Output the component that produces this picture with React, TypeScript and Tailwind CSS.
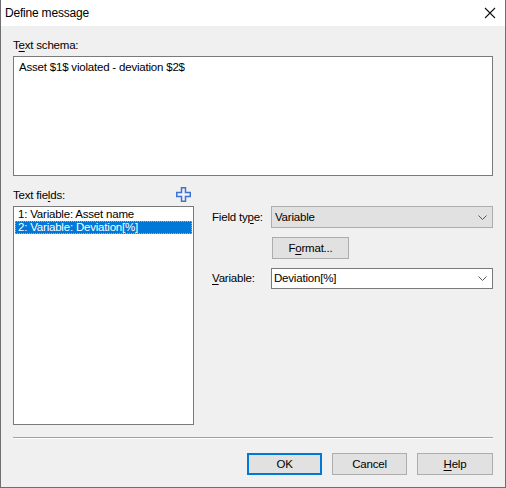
const font = { fontFamily: '"Liberation Sans", Arial, sans-serif' };

function Chevron() {
  return (
    <svg width="9" height="5" viewBox="0 0 9 5" className="shrink-0">
      <path d="M0.5 0.5 L4.5 4.5 L8.5 0.5" fill="none" stroke="#555" strokeWidth="1" />
    </svg>
  );
}

function Label({ pre, u, post, className = "" }: { pre: string; u: string; post: string; className?: string }) {
  return (
    <span className={className}>
      {pre}
      <span className="underline underline-offset-2">{u}</span>
      {post}
    </span>
  );
}

export default function App() {
  return (
    <div
      className="w-[506px] h-[488px] flex flex-col bg-[#f0f0f0] border-x border-b border-[#6f6f6f] text-[11.5px] tracking-[-0.2px] text-black leading-[15px]"
      style={font}
    >
      {/* title bar */}
      <div className="h-[26px] bg-white flex items-center justify-between pl-[4px] pr-[9px] shrink-0">
        <span className="text-[12px]">Define message</span>
        <svg width="12" height="12" viewBox="0 0 12 12">
          <path d="M1 1 L11 11 M11 1 L1 11" stroke="#111" strokeWidth="1.1" />
        </svg>
      </div>

      <div className="flex flex-col flex-1 px-[12px] pt-[12px]">
        <Label pre="T" u="e" post="xt schema:" />
        <div className="mt-[3px] h-[120px] bg-white border border-[#7a7a7a] px-[5px] pt-[3px]">
          Asset $1$ violated - deviation $2$
        </div>

        <div className="flex mt-[10px]">
          <div className="w-[181px] flex flex-col">
            <div className="h-[20px] flex items-start justify-between pr-[3px]">
              <Label pre="Text fie" u="l" post="ds:" className="mt-[2px]" />
              <svg width="15" height="15" viewBox="0 0 15 15" className="mt-[1px]">
                <path
                  d="M5.5 0.75 H9.5 V5.5 H14.25 V9.5 H9.5 V14.25 H5.5 V9.5 H0.75 V5.5 H5.5 Z"
                  fill="none"
                  stroke="#3d74d4"
                  strokeWidth="1.5"
                />
              </svg>
            </div>
            <div className="h-[219px] bg-white border border-[#7a7a7a] p-[1px]">
              <div className="h-[13px] leading-[13px] pl-[3px]">1: Variable: Asset name</div>
              <div className="h-[13px] leading-[11px] pl-[2px] bg-[#0078d7] text-white border border-dotted border-[#f0a060]">
                2: Variable: Deviation[%]
              </div>
            </div>
          </div>

          <div className="flex-1 ml-[18px] pt-[20px] flex flex-col">
            <div className="flex items-center h-[22px]">
              <Label pre="Field ty" u="p" post="e:" className="w-[59px]" />
              <div className="flex-1 h-[22px] bg-[#e1e1e1] border border-[#adadad] flex items-center justify-between pl-[3px] pr-[5px]">
                <span>Variable</span>
                <Chevron />
              </div>
            </div>
            <div className="flex mt-[9px] pl-[60px]">
              <div className="w-[77px] h-[22px] bg-[#e1e1e1] border border-[#adadad] flex items-center justify-center">
                <Label pre="F" u="o" post="rmat..." />
              </div>
            </div>
            <div className="flex items-center h-[21px] mt-[9px]">
              <Label pre="" u="V" post="ariable:" className="w-[59px]" />
              <div className="flex-1 h-[21px] bg-white border border-[#7a7a7a] flex items-center justify-between pl-[2px] pr-[5px]">
                <span>Deviation[%]</span>
                <Chevron />
              </div>
            </div>
          </div>
        </div>

        <div className="mt-[12px] border-t border-[#a0a0a0] border-b border-b-white" />

        <div className="flex justify-end gap-[10px] mt-[14px]">
          <div className="w-[75px] h-[22px] bg-[#e1e1e1] border-2 border-[#0078d7] flex items-center justify-center">
            OK
          </div>
          <div className="w-[75px] h-[22px] bg-[#e1e1e1] border border-[#adadad] flex items-center justify-center">
            Cancel
          </div>
          <div className="w-[76px] h-[22px] bg-[#e1e1e1] border border-[#adadad] flex items-center justify-center">
            <Label pre="" u="H" post="elp" />
          </div>
        </div>
      </div>
    </div>
  );
}
